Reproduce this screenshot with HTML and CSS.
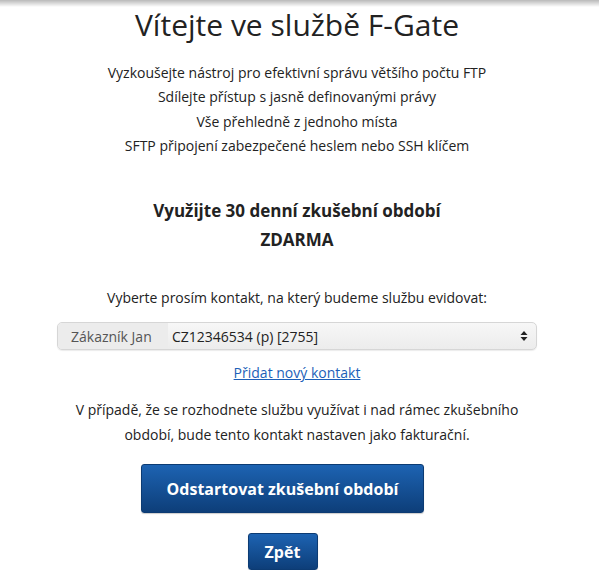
FILE: index.html
```html
<!DOCTYPE html>
<html lang="cs">
<head>
<meta charset="utf-8">
<title>F-Gate</title>
<link rel="stylesheet" href="styles.css">
</head>
<body>
<div class="topshade"></div>
<main class="page">
  <h1 class="title">Vítejte ve službě F-Gate</h1>
  <ul class="features">
    <li>Vyzkoušejte nástroj pro efektivní správu většího počtu FTP</li>
    <li>Sdílejte přístup s jasně definovanými právy</li>
    <li>Vše přehledně z jednoho místa</li>
    <li>SFTP připojení zabezpečené heslem nebo SSH klíčem</li>
  </ul>
  <h2 class="offer">Využijte 30 denní zkušební období<br>ZDARMA</h2>
  <p class="prompt">Vyberte prosím kontakt, na který budeme službu evidovat:</p>
  <div class="select">
    <span class="addon">Zákazník Jan</span>
    <span class="value">CZ12346534 (p) [2755]</span>
    <svg class="arrows" width="8" height="12" viewBox="0 0 8 12"><path d="M4 1 L7.5 5 H0.5 Z M4 11 L7.5 7 H0.5 Z" fill="#222"/></svg>
  </div>
  <a class="addlink" href="#">Přidat nový kontakt</a>
  <p class="note">V případě, že se rozhodnete službu využívat i nad rámec zkušebního období, bude tento kontakt nastaven jako fakturační.</p>
  <button class="btn btn-start">Odstartovat zkušební období</button>
  <button class="btn btn-back">Zpět</button>
</main>
</body>
</html>
```

FILE: styles.css
```css
* { box-sizing: border-box; }
html, body { margin: 0; padding: 0; background: #fff; }
body {
  font-family: "Open Sans", "Noto Sans", sans-serif;
  color: #222;
  position: relative;
}
.topshade {
  position: absolute;
  left: 0; right: 0; top: 0;
  height: 7px;
  background: linear-gradient(#b9b9b9, rgba(255,255,255,0));
}
.page {
  display: flex;
  flex-direction: column;
  align-items: center;
  padding: 5px 5px 0 0;
}
.title {
  margin: 0;
  font-size: 30px;
  font-weight: 400;
  line-height: 40px;
  color: #222;
}
.features {
  list-style: none;
  margin: 16px 0 0;
  padding: 0;
  text-align: center;
  font-size: 14px;
  line-height: 24.3px;
}
.offer {
  margin: 38px 0 0;
  text-align: center;
  font-size: 17px;
  font-weight: 700;
  line-height: 29px;
}
.prompt {
  margin: 34px 0 0;
  font-size: 14px;
  line-height: 20px;
}
.select {
  margin-top: 14px;
  width: 480px;
  height: 28px;
  display: flex;
  align-items: center;
  border: 1px solid #d6d6d6;
  border-radius: 5px;
  background: linear-gradient(#f7f7f7, #ececec);
  box-shadow: 0 1px 1px rgba(0,0,0,0.08);
  font-size: 14px;
  overflow: hidden;
}
.addon {
  align-self: stretch;
  display: flex;
  align-items: center;
  padding: 0 12px 0 13px;
  background: #ececec;
  color: #555;
  width: 110px;
}
.value {
  flex: 1;
  padding-left: 4px;
  color: #222;
}
.arrows { margin-right: 8px; }
.addlink {
  margin-top: 13px;
  font-size: 14px;
  line-height: 20px;
  color: #1c5fb8;
  text-decoration: underline;
}
.note {
  margin: 15px 0 0;
  width: 470px;
  text-align: center;
  font-size: 14px;
  line-height: 24.5px;
}
.btn {
  font-family: "Open Sans", "Noto Sans", sans-serif;
  font-weight: 700;
  font-size: 16px;
  color: #fff;
  border: 1px solid #0c3b73;
  border-radius: 3px;
  background: linear-gradient(#1d63b2, #0d3e79);
  box-shadow: 0 1px 1px rgba(0,0,0,0.2);
  cursor: pointer;
  margin-right: 29px;
}
.btn-start {
  margin-top: 17px;
  width: 283px;
  height: 49px;
}
.btn-back {
  margin-top: 20px;
  width: 70px;
  height: 37px;
}
```
